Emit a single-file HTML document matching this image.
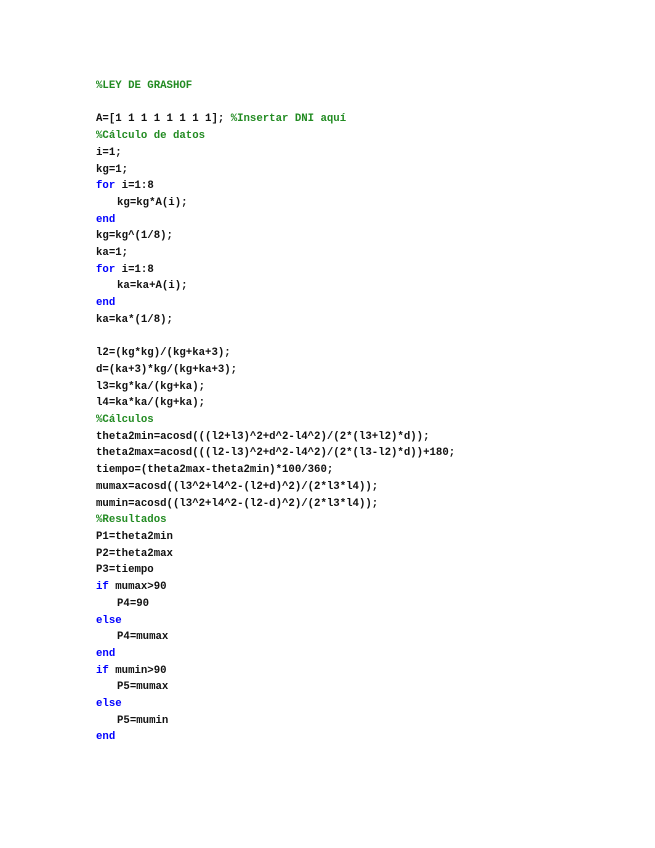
<!DOCTYPE html>
<html><head><meta charset="utf-8"><style>
html,body{margin:0;padding:0;background:#fff;width:655px;height:848px;overflow:hidden}
pre{position:absolute;left:96px;top:78px;margin:0;font-family:"Liberation Mono",monospace;font-size:10.7px;line-height:16.7px;font-weight:bold;color:#111;letter-spacing:0}
.c{color:#228B22}.k{color:#0000ff}
.i{padding-left:21px;display:inline-block}
</style></head><body>
<pre><span class="c">%LEY DE GRASHOF</span>

A=[1 1 1 1 1 1 1 1]; <span class="c">%Insertar DNI aquí</span>
<span class="c">%Cálculo de datos</span>
i=1;
kg=1;
<span class="k">for</span> i=1:8
<span class="i">kg=kg*A(i);</span>
<span class="k">end</span>
kg=kg^(1/8);
ka=1;
<span class="k">for</span> i=1:8
<span class="i">ka=ka+A(i);</span>
<span class="k">end</span>
ka=ka*(1/8);

l2=(kg*kg)/(kg+ka+3);
d=(ka+3)*kg/(kg+ka+3);
l3=kg*ka/(kg+ka);
l4=ka*ka/(kg+ka);
<span class="c">%Cálculos</span>
theta2min=acosd(((l2+l3)^2+d^2-l4^2)/(2*(l3+l2)*d));
theta2max=acosd(((l2-l3)^2+d^2-l4^2)/(2*(l3-l2)*d))+180;
tiempo=(theta2max-theta2min)*100/360;
mumax=acosd((l3^2+l4^2-(l2+d)^2)/(2*l3*l4));
mumin=acosd((l3^2+l4^2-(l2-d)^2)/(2*l3*l4));
<span class="c">%Resultados</span>
P1=theta2min
P2=theta2max
P3=tiempo
<span class="k">if</span> mumax&gt;90
<span class="i">P4=90</span>
<span class="k">else</span>
<span class="i">P4=mumax</span>
<span class="k">end</span>
<span class="k">if</span> mumin&gt;90
<span class="i">P5=mumax</span>
<span class="k">else</span>
<span class="i">P5=mumin</span>
<span class="k">end</span></pre>
</body></html>
